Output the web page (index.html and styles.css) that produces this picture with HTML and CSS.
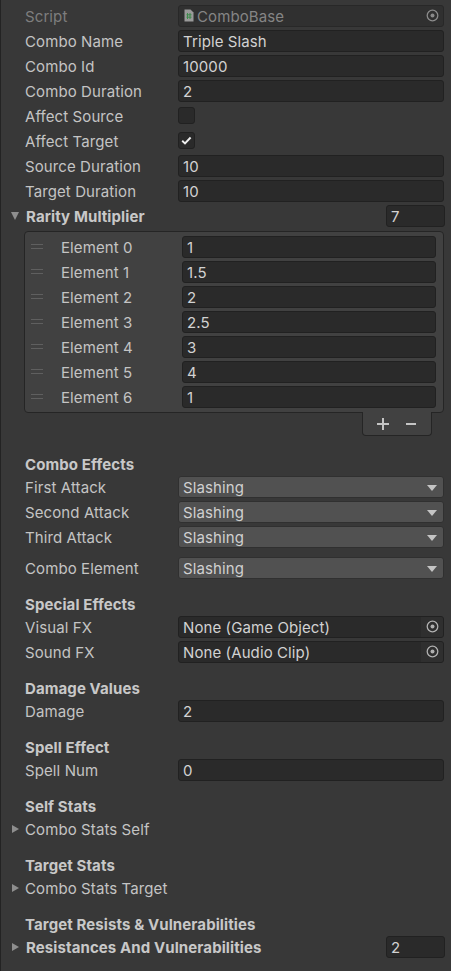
FILE: index.html
```html
<!DOCTYPE html>
<html>
	<head>
		<meta charset="utf-8" />
		<title>ComboBase Inspector</title>
		<link rel="stylesheet" href="styles.css">
	</head>
	<body>
		<div class="inspector">
			<div class="row disabled">
				<span class="label">Script</span>
				<div class="field object script">
					<svg class="script-icon" width="10" height="13" viewBox="0 0 10 13"><path d="M0.5 0.5h6l3 3v9h-9z" fill="#9a9a9a"/><path d="M3.5 4v6M6 4v6M2.5 5.8h5M2.5 8.2h5" stroke="#3d8a4a" stroke-width="1"/></svg>
					<span class="value">ComboBase</span>
					<span class="picker"><svg width="13" height="13" viewBox="0 0 13 13"><circle cx="6.5" cy="6.5" r="5.3" fill="none" stroke="currentColor" stroke-width="1.3"/><circle cx="6.5" cy="6.5" r="2" fill="currentColor"/></svg></span>
				</div>
			</div>
			<div class="row"><span class="label">Combo Name</span><div class="field">Triple Slash</div></div>
			<div class="row"><span class="label">Combo Id</span><div class="field">10000</div></div>
			<div class="row"><span class="label">Combo Duration</span><div class="field">2</div></div>
			<div class="row"><span class="label">Affect Source</span><div class="checkbox"></div></div>
			<div class="row">
				<span class="label">Affect Target</span>
				<div class="checkbox"><svg width="15" height="15" viewBox="0 0 15 15"><path d="M3.2 7.8l2.8 2.7 5.6-6" fill="none" stroke="#eeeeee" stroke-width="1.9"/></svg></div>
			</div>
			<div class="row"><span class="label">Source Duration</span><div class="field">10</div></div>
			<div class="row"><span class="label">Target Duration</span><div class="field">10</div></div>

			<div class="foldout-row bold">
				<span class="arrow down"></span>
				<span class="label">Rarity Multiplier</span>
				<div class="field size">7</div>
			</div>
			<div class="list">
				<div class="list-body">
					<div class="element"><span class="handle"></span><span class="label">Element 0</span><div class="field">1</div></div>
					<div class="element"><span class="handle"></span><span class="label">Element 1</span><div class="field">1.5</div></div>
					<div class="element"><span class="handle"></span><span class="label">Element 2</span><div class="field">2</div></div>
					<div class="element"><span class="handle"></span><span class="label">Element 3</span><div class="field">2.5</div></div>
					<div class="element"><span class="handle"></span><span class="label">Element 4</span><div class="field">3</div></div>
					<div class="element"><span class="handle"></span><span class="label">Element 5</span><div class="field">4</div></div>
					<div class="element"><span class="handle"></span><span class="label">Element 6</span><div class="field">1</div></div>
				</div>
				<div class="list-footer">
					<svg width="14" height="14" viewBox="0 0 14 14"><path d="M7 1v12M1 7h12" stroke="#c4c4c4" stroke-width="2"/></svg>
					<svg width="14" height="14" viewBox="0 0 14 14"><path d="M2 7h10" stroke="#c4c4c4" stroke-width="2"/></svg>
				</div>
			</div>

			<div class="header first">Combo Effects</div>
			<div class="row"><span class="label">First Attack</span><div class="dropdown">Slashing<span class="caret"></span></div></div>
			<div class="row"><span class="label">Second Attack</span><div class="dropdown">Slashing<span class="caret"></span></div></div>
			<div class="row"><span class="label">Third Attack</span><div class="dropdown">Slashing<span class="caret"></span></div></div>
			<div class="row spaced"><span class="label">Combo Element</span><div class="dropdown">Slashing<span class="caret"></span></div></div>

			<div class="header">Special Effects</div>
			<div class="row">
				<span class="label">Visual FX</span>
				<div class="field object"><span class="value">None (Game Object)</span><span class="picker"><svg width="13" height="13" viewBox="0 0 13 13"><circle cx="6.5" cy="6.5" r="5.3" fill="none" stroke="currentColor" stroke-width="1.3"/><circle cx="6.5" cy="6.5" r="2" fill="currentColor"/></svg></span></div>
			</div>
			<div class="row">
				<span class="label">Sound FX</span>
				<div class="field object"><span class="value">None (Audio Clip)</span><span class="picker"><svg width="13" height="13" viewBox="0 0 13 13"><circle cx="6.5" cy="6.5" r="5.3" fill="none" stroke="currentColor" stroke-width="1.3"/><circle cx="6.5" cy="6.5" r="2" fill="currentColor"/></svg></span></div>
			</div>

			<div class="header">Damage Values</div>
			<div class="row"><span class="label">Damage</span><div class="field">2</div></div>

			<div class="header">Spell Effect</div>
			<div class="row"><span class="label">Spell Num</span><div class="field">0</div></div>

			<div class="header">Self Stats</div>
			<div class="foldout-row"><span class="arrow right"></span><span class="label">Combo Stats Self</span></div>

			<div class="header">Target Stats</div>
			<div class="foldout-row"><span class="arrow right"></span><span class="label">Combo Stats Target</span></div>

			<div class="header">Target Resists &amp; Vulnerabilities</div>
			<div class="foldout-row bold">
				<span class="arrow right"></span>
				<span class="label">Resistances And Vulnerabilities</span>
				<div class="field size">2</div>
			</div>
		</div>
	</body>
</html>
```

FILE: styles.css
```css
* {
	box-sizing: border-box;
}
body {
	margin: 0;
	background: #383838;
	font-family: Inter, "Noto Sans", sans-serif;
	font-size: 15px;
	letter-spacing: 0.1px;
	color: #c4c4c4;
}
.inspector {
	min-height: 971px;
	border-left: 1px solid #232323;
	padding: 3px 7px 10px 0;
}
.row {
	display: grid;
	grid-template-columns: 153px 1fr;
	align-items: center;
	height: 25px;
	padding-left: 24px;
}
.row.spaced { margin-top: 6px; }
.label {
	padding-top: 2px;
	white-space: nowrap;
}
.disabled .label { color: #7e7e7e; }

/* text and object fields */
.field {
	display: flex;
	align-items: center;
	height: 22px;
	padding: 2px 4px 0;
	background: #2a2a2a;
	border: 1px solid #212121;
	border-radius: 3px;
	color: #d2d2d2;
	overflow: hidden;
	white-space: nowrap;
}
.field.object { padding-right: 0; }
.field.object .value { flex: 1; }
.field.script { color: #858585; background: #303030; border-color: #282828; }
.script-icon { margin: -2px 3px 0 1px; }
.picker {
	display: flex;
	align-items: center;
	justify-content: center;
	width: 22px;
	height: 22px;
	margin-top: -2px;
	background: #2f2f2f;
	color: #b0b0b0;
}
.field.script .picker { background: none; color: #8a8a8a; }

.checkbox {
	display: flex;
	align-items: center;
	justify-content: center;
	width: 17px;
	height: 17px;
	background: #2a2a2a;
	border: 1px solid #212121;
	border-radius: 3px;
}

.dropdown {
	position: relative;
	display: flex;
	align-items: center;
	height: 22px;
	padding: 2px 4px 0;
	background: #515151;
	border: 1px solid #303030;
	border-radius: 3px;
	color: #d0d0d0;
}
.caret {
	position: absolute;
	right: 6px;
	top: 8px;
	border-left: 5px solid transparent;
	border-right: 5px solid transparent;
	border-top: 6px solid #c4c4c4;
}

/* foldouts */
.foldout-row {
	display: flex;
	align-items: center;
	height: 25px;
	padding-left: 10px;
}
.foldout-row .label { flex: 1; padding-left: 6px; }
.foldout-row.bold .label { font-weight: 700; padding-left: 7px; color: #c8c8c8; }
.foldout-row .field.size { width: 59px; margin-right: -1px; }
.arrow {
	width: 0;
	height: 0;
}
.arrow.down {
	border-left: 4.5px solid transparent;
	border-right: 4.5px solid transparent;
	border-top: 8px solid #8e8e8e;
}
.arrow.right {
	border-top: 4.5px solid transparent;
	border-bottom: 4.5px solid transparent;
	border-left: 7px solid #8e8e8e;
	margin-left: 1px;
	margin-top: 1px;
}

/* reorderable list */
.list {
	margin: 3px 0 0 23px;
}
.list-body {
	padding: 2px 7px 3px 0;
	background: #414141;
	border: 1px solid #252525;
	border-radius: 4px;
}
.element {
	display: grid;
	grid-template-columns: 30px 122px 1fr;
	align-items: center;
	height: 25px;
	padding-left: 6px;
}
.handle {
	width: 12px;
	height: 5px;
	border-top: 1px solid #5f5f5f;
	border-bottom: 1px solid #5f5f5f;
}
.element .field { margin-left: -1px; }
.list-footer {
	display: flex;
	justify-content: space-around;
	align-items: center;
	width: 70px;
	height: 24px;
	margin: -1px 12px 0 auto;
	padding: 0 6px;
	background: #414141;
	border: 1px solid #252525;
	border-top: none;
	border-radius: 0 0 4px 4px;
}

.header {
	display: flex;
	align-items: center;
	height: 21px;
	margin-top: 13px;
	padding: 2px 0 0 24px;
	font-weight: 700;
	color: #c8c8c8;
}
.header.first { margin-top: 17px; }
```
